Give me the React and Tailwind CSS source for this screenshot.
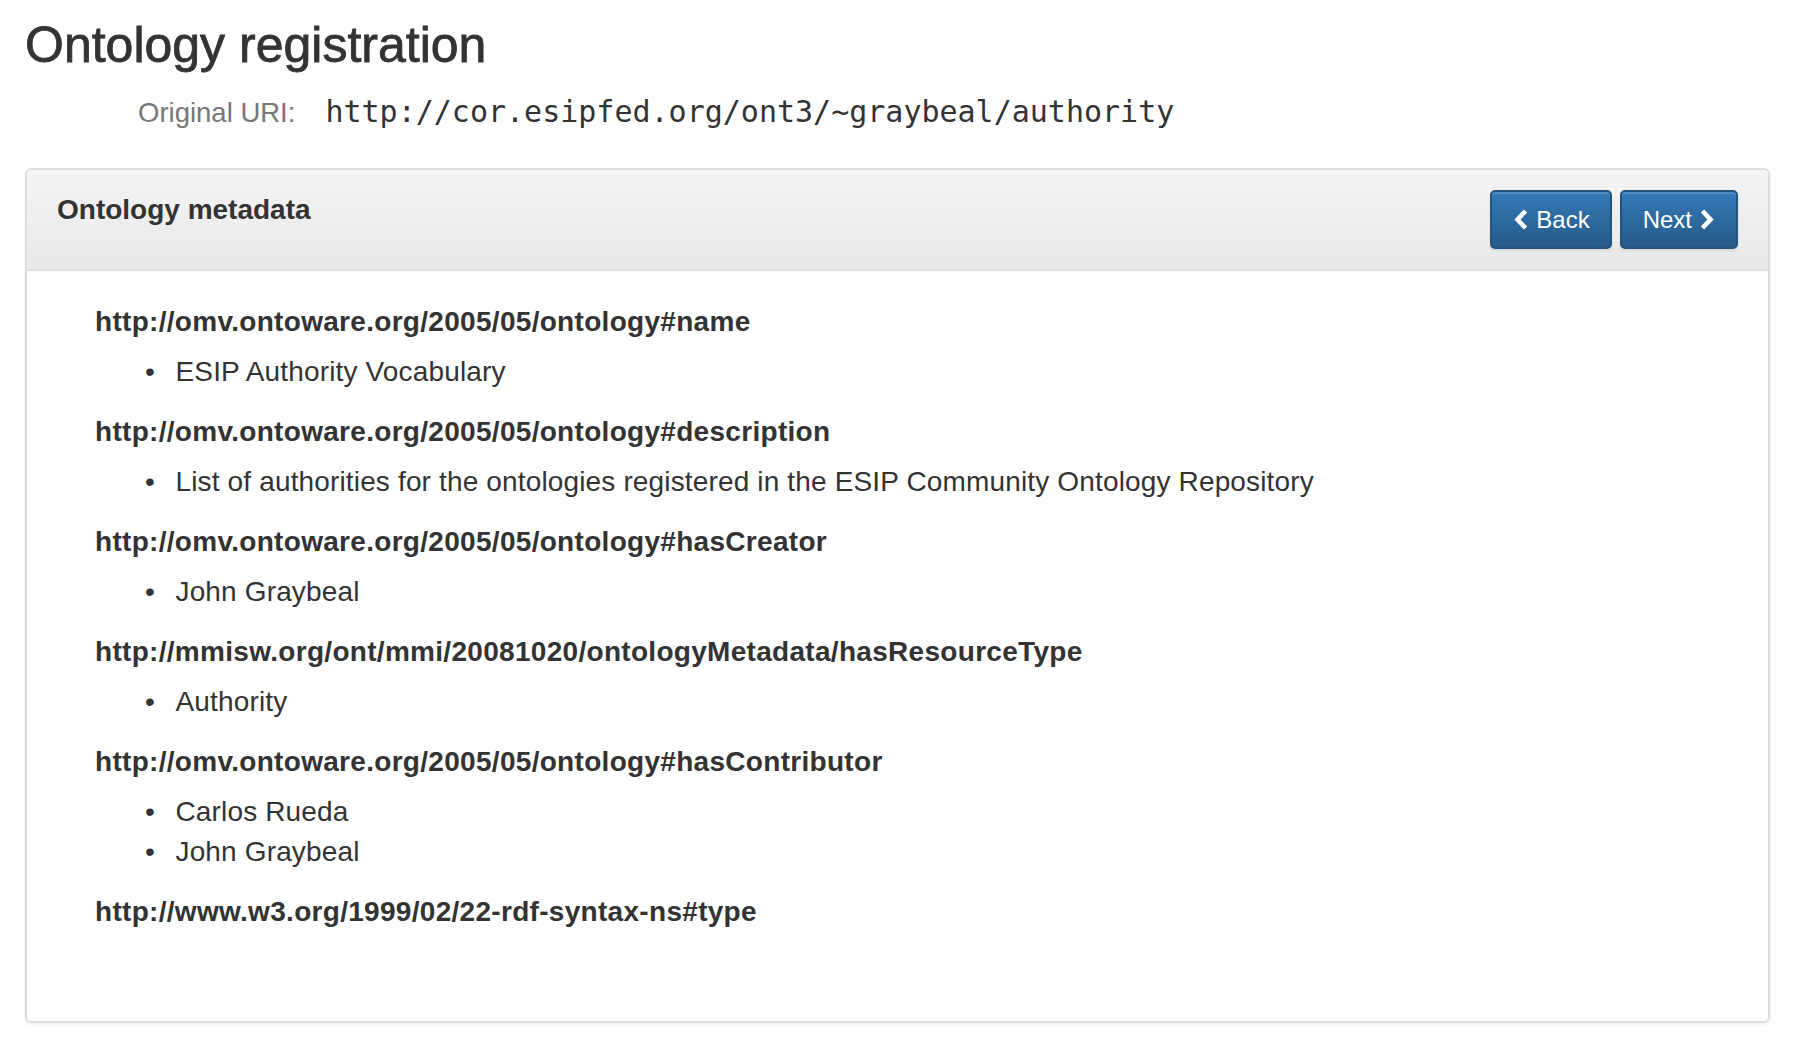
import React from "react";

const entries = [
  {
    term: "http://omv.ontoware.org/2005/05/ontology#name",
    values: ["ESIP Authority Vocabulary"],
  },
  {
    term: "http://omv.ontoware.org/2005/05/ontology#description",
    values: [
      "List of authorities for the ontologies registered in the ESIP Community Ontology Repository",
    ],
  },
  {
    term: "http://omv.ontoware.org/2005/05/ontology#hasCreator",
    values: ["John Graybeal"],
  },
  {
    term: "http://mmisw.org/ont/mmi/20081020/ontologyMetadata/hasResourceType",
    values: ["Authority"],
  },
  {
    term: "http://omv.ontoware.org/2005/05/ontology#hasContributor",
    values: ["Carlos Rueda", "John Graybeal"],
  },
  {
    term: "http://www.w3.org/1999/02/22-rdf-syntax-ns#type",
    values: [],
  },
];

function Chevron({ dir }) {
  const d = dir === "left" ? "M12.5 2 L4.5 10.5 L12.5 19" : "M2.5 2 L10.5 10.5 L2.5 19";
  return (
    <svg width="15" height="21" viewBox="0 0 15 21" className="shrink-0">
      <path d={d} fill="none" stroke="white" strokeWidth="4.6" strokeLinejoin="miter" />
    </svg>
  );
}

function NavButton({ children, className }) {
  return (
    <button
      type="button"
      className={
        "flex h-[59px] items-center gap-[8px] rounded-[5px] border-2 border-[#245580] bg-linear-to-b from-[#337ab7] to-[#265a88] text-[24px] leading-[36px] text-white shadow-[inset_0_2px_0_rgba(255,255,255,0.15),0_2px_2px_rgba(0,0,0,0.075)] " +
        className
      }
    >
      {children}
    </button>
  );
}

export default function App() {
  return (
    <div className="min-h-[1062px] bg-white font-['Liberation_Sans',Arial,sans-serif] text-[#333]">
      <h1 className="ml-[25px] pt-[18px] text-[50px] font-normal leading-[55px] [-webkit-text-stroke:0.8px_#333]">
        Ontology registration
      </h1>

      <div className="mt-[19px] flex h-[40px] items-baseline pl-[138px] leading-[40px]">
        <span className="text-[27.5px] text-[#777]">Original URI:</span>
        <span className="ml-[30px] font-['DejaVu_Sans_Mono',monospace] text-[30px] text-[#333]">
          http://cor.esipfed.org/ont3/~graybeal/authority
        </span>
      </div>

      <section className="mt-[36px] ml-[25px] mr-[28px] overflow-hidden rounded-[6px] border-2 border-[#dddddd] shadow-[0_2px_4px_rgba(0,0,0,0.05)]">
        <div className="flex items-start justify-between border-b-2 border-[#dddddd] bg-linear-to-b from-[#f5f5f5] to-[#e8e8e8] px-[30px] py-[20px]">
          <h3 className="text-[28px] font-bold leading-[40px]">Ontology metadata</h3>
          <div className="flex gap-[8px]">
            <NavButton className="pl-[21px] pr-[20px]">
              <Chevron dir="left" />
              <span>Back</span>
            </NavButton>
            <NavButton className="pl-[21px] pr-[21px]">
              <span>Next</span>
              <Chevron dir="right" />
            </NavButton>
          </div>
        </div>

        <dl className="pl-[68px] pr-[30px] pt-[31px] pb-[89px] text-[28px] leading-[40px]">
          {entries.map((entry) => (
            <div key={entry.term}>
              <dt className="font-bold tracking-[0.3px]">{entry.term}</dt>
              {entry.values.length > 0 && (
                <dd>
                  <ul className="mt-[10px] mb-[20px] pl-[50px] tracking-[0.15px]">
                    {entry.values.map((value, i) => (
                      <li key={i} className="flex">
                        <span className="w-[30.5px] shrink-0">•</span>
                        <span>{value}</span>
                      </li>
                    ))}
                  </ul>
                </dd>
              )}
            </div>
          ))}
        </dl>
      </section>
    </div>
  );
}
